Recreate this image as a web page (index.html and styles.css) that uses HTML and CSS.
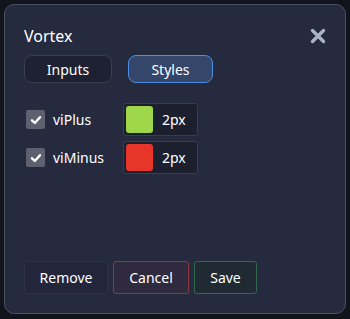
FILE: index.html
```html
<!DOCTYPE html>
<html lang="en">
<head>
    <meta charset="UTF-8">
    <meta name="viewport" content="width=device-width, initial-scale=1.0">
    <title>Vortex</title>
    <link rel="stylesheet" href="styles.css">
</head>
<body>
    <div class="modal">
        <div class="modal-head">
            <span class="title">Vortex</span>
            <button class="close" aria-label="Close">
                <svg width="16" height="16" viewBox="0 0 16 16">
                    <path d="M2.5 2.5 L13.5 13.5 M13.5 2.5 L2.5 13.5" stroke="#a9b3c9" stroke-width="3.4" stroke-linecap="round"/>
                </svg>
            </button>
        </div>
        <div class="tabs">
            <button class="tab">Inputs</button>
            <button class="tab active">Styles</button>
        </div>
        <div class="rows">
            <div class="row">
                <label class="check-label">
                    <span class="check">
                        <svg width="12" height="12" viewBox="0 0 12 12"><path d="M2 6.3 L4.8 9 L10 3.2" stroke="#fff" stroke-width="2.4" fill="none" stroke-linecap="round" stroke-linejoin="round"/></svg>
                    </span>
                    viPlus
                </label>
                <div class="style-box">
                    <span class="swatch green"></span>
                    <span class="width">2px</span>
                </div>
            </div>
            <div class="row">
                <label class="check-label">
                    <span class="check">
                        <svg width="12" height="12" viewBox="0 0 12 12"><path d="M2 6.3 L4.8 9 L10 3.2" stroke="#fff" stroke-width="2.4" fill="none" stroke-linecap="round" stroke-linejoin="round"/></svg>
                    </span>
                    viMinus
                </label>
                <div class="style-box">
                    <span class="swatch red"></span>
                    <span class="width">2px</span>
                </div>
            </div>
        </div>
        <div class="footer">
            <button class="btn remove">Remove</button>
            <button class="btn cancel">Cancel</button>
            <button class="btn save">Save</button>
        </div>
    </div>
</body>
</html>
```

FILE: styles.css
```css
body {
    margin: 0;
    background-color: #12141c;
    color: #ffffff;
    font-family: "Noto Sans", "Open Sans", sans-serif;
}
button {
    font-family: inherit;
    color: #ffffff;
    cursor: pointer;
}
.modal {
    box-sizing: border-box;
    margin: 4px;
    width: 342px;
    height: 310px;
    background-color: #262a3e;
    border: 1px solid #4a4e62;
    border-radius: 10px;
    padding: 20px 19px 19px 19px;
    display: flex;
    flex-direction: column;
}
.modal-head {
    display: flex;
    justify-content: space-between;
    align-items: center;
    height: 22px;
}
.title {
    font-size: 16px;
    line-height: 20px;
}
.close {
    background: none;
    border: none;
    padding: 0;
    display: flex;
}
.tabs {
    display: flex;
    gap: 16px;
    margin-top: 8px;
}
.tab {
    height: 28px;
    width: 88px;
    font-size: 14px;
    background-color: #1e2131;
    border: 1px solid #3a3e51;
    border-radius: 8px;
    padding: 0;
}
.tab.active {
    width: 85px;
    background-color: #34466a;
    border-color: #4a8fe0;
}
.rows {
    display: flex;
    flex-direction: column;
    gap: 5px;
    margin-top: 20px;
}
.row {
    display: flex;
    align-items: center;
    height: 33px;
}
.check-label {
    display: flex;
    align-items: center;
    gap: 8px;
    width: 97px;
    padding-left: 2px;
    font-size: 14px;
}
.check {
    width: 19px;
    height: 19px;
    background-color: #5f606f;
    border-radius: 2px;
    display: flex;
    align-items: center;
    justify-content: center;
}
.style-box {
    box-sizing: border-box;
    display: flex;
    align-items: center;
    width: 75px;
    height: 33px;
    padding: 2px;
    background-color: #1c1f2d;
    border: 1px solid #3a3d4f;
    border-radius: 3px;
}
.swatch {
    width: 27px;
    height: 27px;
    border-radius: 3px;
}
.swatch.green {
    background-color: #9ed84a;
}
.swatch.red {
    background-color: #e8352a;
}
.width {
    margin-left: 9px;
    font-size: 14px;
}
.footer {
    margin-top: auto;
    display: flex;
    gap: 5px;
}
.btn {
    height: 33px;
    font-size: 14px;
    border-radius: 3px;
    padding: 0;
}
.remove {
    width: 84px;
    background-color: #23263a;
    border: 1px solid #2e3246;
}
.cancel {
    width: 76px;
    background-color: #302a3e;
    border: 1px solid #8c3a3f;
}
.save {
    width: 63px;
    background-color: #1f2a33;
    border: 1px solid #2f6a4f;
}
```
